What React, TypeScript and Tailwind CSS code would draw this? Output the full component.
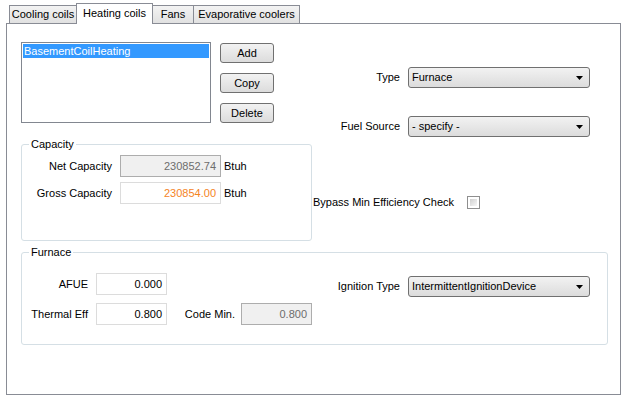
import React from 'react';

const btn = 'w-[54px] h-[20px] rounded-[3px] border border-[#707070] bg-gradient-to-b from-[#f2f2f2] to-[#dcdcdc] flex items-center justify-center text-black';

const Select = ({ value, className = '' }: { value: string; className?: string }) => (
    <div className={`w-[182px] h-[21px] rounded-[3px] border border-[#707070] bg-gradient-to-b from-[#f2f2f2] to-[#dcdcdc] flex items-center pl-[3px] pr-[6px] ${className}`}>
        <span className="flex-1 truncate">{value}</span>
        <svg width="7" height="4" viewBox="0 0 7 4"><path d="M0 0h7L3.5 4z" fill="#000" /></svg>
    </div>
);

const Field = ({ value, w, tone = 'normal' }: { value: string; w: string; tone?: 'normal' | 'disabled' | 'orange' }) => {
    const look = tone === 'disabled'
        ? 'bg-[#f0f0f0] border-[#adadad] text-[#6d6d6d]'
        : tone === 'orange' ? 'bg-white border-[#dcdcdc] text-[#f5841f]' : 'bg-white border-[#dcdcdc] text-black';
    return <div className={`${w} h-[22px] border ${look} flex items-center justify-end pr-[4px]`}>{value}</div>;
};

const Group = ({ title, className, children }: { title: string; className: string; children: React.ReactNode }) => (
    <div className={`relative rounded-[3px] border border-[#d5dfe5] ${className}`}>
        <span className="absolute -top-[7px] left-[7px] px-[2px] bg-white leading-[13px]">{title}</span>
        {children}
    </div>
);

export default function App() {
    const tabs = ['Cooling coils', 'Heating coils', 'Fans', 'Evaporative coolers'];
    const widths = ['w-[68px]', 'w-[77px]', 'w-[42px]', 'w-[107px]'];

    return (
        <div className="w-[629px] h-[399px] bg-white text-[11px] leading-[13px] text-black" style={{ fontFamily: '"Liberation Sans", Arial, sans-serif' }}>
            {/* tab strip */}
            <div className="h-[23px] flex items-end pl-[9px]">
                {tabs.map((t, i) => i === 1 ? (
                    <div key={t} className={`${widths[i]} h-[21px] -ml-px -mb-px relative z-10 bg-white border border-b-0 border-[#898c95] flex justify-center pt-[3px]`}>{t}</div>
                ) : (
                    <div key={t} className={`${widths[i]} h-[18px] ${i > 0 ? '-ml-px' : ''} bg-gradient-to-b from-[#f3f3f3] to-[#e1e1e1] border border-b-0 border-[#898c95] flex justify-center pt-[2px]`}>{t}</div>
                ))}
            </div>

            {/* panel */}
            <div className="ml-[6px] w-[615px] h-[372px] border border-[#898c95] pl-[14px] pt-[18px]">
                <div className="flex">
                    {/* left column */}
                    <div className="w-[291px] flex flex-col">
                        <div className="flex">
                            <div className="w-[190px] h-[81px] border border-[#828790] p-px">
                                <div className="h-[14px] bg-[#3399ff] text-white pl-[1px] leading-[14px]">BasementCoilHeating</div>
                            </div>
                            <div className="ml-[9px] mt-px flex flex-col gap-[10px]">
                                <div className={btn}>Add</div>
                                <div className={btn}>Copy</div>
                                <div className={btn}>Delete</div>
                            </div>
                        </div>

                        <Group title="Capacity" className="mt-[21px] h-[97px] pt-[10px]">
                            <div className="flex flex-col gap-[5px]">
                                {[['Net Capacity', '230852.74', 'disabled'], ['Gross Capacity', '230854.00', 'orange']].map(([l, v, t]) => (
                                    <div key={l} className="flex items-center">
                                        <span className="w-[90px] text-right">{l}</span>
                                        <div className="ml-[8px]"><Field value={v} w="w-[101px]" tone={t as 'disabled' | 'orange'} /></div>
                                        <span className="ml-[3px]">Btuh</span>
                                    </div>
                                ))}
                            </div>
                        </Group>
                    </div>

                    {/* right column */}
                    <div className="flex flex-col">
                        <div className="mt-[25px] flex items-center">
                            <span className="w-[88px] text-right">Type</span>
                            <Select value="Furnace" className="ml-[8px]" />
                        </div>
                        <div className="mt-[28px] flex items-center">
                            <span className="w-[88px] text-right">Fuel Source</span>
                            <Select value="- specify -" className="ml-[8px]" />
                        </div>
                        <div className="mt-[59px] flex items-center">
                            <span className="w-[155px] pl-px">Bypass Min Efficiency Check</span>
                            <div className="w-[13px] h-[13px] border border-[#8f8f8f] p-[2px] bg-white">
                                <div className="w-full h-full bg-gradient-to-br from-[#cfcfcf] to-[#f7f7f7]" />
                            </div>
                        </div>
                    </div>
                </div>

                <Group title="Furnace" className="mt-[11px] w-[587px] h-[93px] pt-[20px]">
                    <div className="flex flex-col gap-[6px]">
                        <div className="flex items-start">
                            <span className="w-[66px] h-[22px] flex items-center justify-end">AFUE</span>
                            <div className="ml-[8px]"><Field value="0.000" w="w-[71px]" /></div>
                            <div className="mt-[3px] flex items-center">
                                <span className="w-[233px] text-right">Ignition Type</span>
                                <Select value="IntermittentIgnitionDevice" className="ml-[8px]" />
                            </div>
                        </div>
                        <div className="flex items-center">
                            <span className="w-[66px] text-right">Thermal Eff</span>
                            <div className="ml-[8px]"><Field value="0.800" w="w-[71px]" /></div>
                            <span className="w-[68px] text-right">Code Min.</span>
                            <div className="ml-[6px]"><Field value="0.800" w="w-[71px]" tone="disabled" /></div>
                        </div>
                    </div>
                </Group>
            </div>
        </div>
    );
}
